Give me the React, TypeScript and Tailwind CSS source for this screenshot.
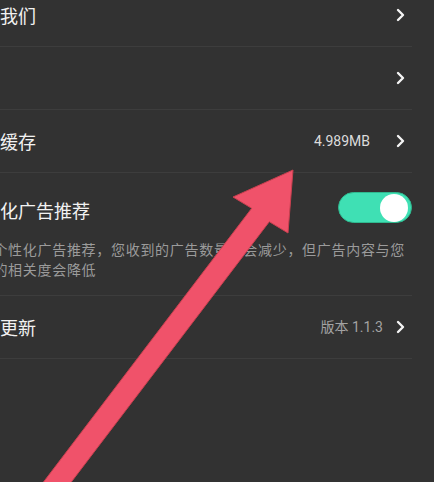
import React from "react";

function Chevron() {
  return (
    <svg width="9" height="14" viewBox="0 0 9 14" className="shrink-0">
      <path d="M2 2 L7 7 L2 12" fill="none" stroke="#f4f4f4" strokeWidth="2.4" strokeLinecap="round" strokeLinejoin="round" />
    </svg>
  );
}

function Row({ label, value, valueClass = "", gap = "mr-[13px]" }: { label: string; value?: string; valueClass?: string; gap?: string }) {
  return (
    <div className="h-[63px] flex items-center justify-between border-b border-[#3d3d3d] pr-[7px]">
      <span className="text-[18px] text-[#f2f2f2] leading-[26px]">{label}</span>
      <div className="flex items-center">
        {value && <span className={`text-[14px] ${gap} ${valueClass}`} style={{ fontFamily: "Roboto, 'Noto Sans CJK SC', sans-serif" }}>{value}</span>}
        <Chevron />
      </div>
    </div>
  );
}

export default function App() {
  return (
    <div
      className="relative w-[434px] h-[482px] overflow-hidden bg-[#323232]"
      style={{ fontFamily: "'Noto Sans CJK SC', 'Noto Sans', sans-serif" }}
    >
      {/* settings list, shifted left like the cropped screenshot */}
      <div className="ml-[-36px] mt-[-16px] w-[448px]">
        <Row label="关于我们" />
        <Row label="帮助" />
        <Row label="清除缓存" value="4.989MB" valueClass="text-[#dcdcdc]" gap="mr-[26px]" />

        <div className="border-b border-[#3d3d3d] pt-[19px] pb-[16px]">
          <div className="h-[31px] flex items-center justify-between">
            <span className="text-[18px] text-[#f2f2f2] leading-[26px] mt-[4px]">个性化广告推荐</span>
            <div className="w-[74px] h-[31px] rounded-full bg-[#3fe0b4] border border-[#2fb98f] flex items-center justify-end pr-[3px]">
              <div className="w-[28px] h-[28px] rounded-full bg-white" />
            </div>
          </div>
          <p className="mt-[16px] text-[14px] leading-[20px] tracking-[0.7px] text-[#9b9b9b] whitespace-nowrap">
            关闭个性化广告推荐，您收到的广告数量不会减少，但广告内容与您
            <br />
            兴趣的相关度会降低
          </p>
        </div>

        <Row label="检查更新" value="版本 1.1.3" valueClass="text-[#a3a3a3]" gap="mr-[13px]" />
      </div>

      {/* red annotation arrow */}
      <svg className="absolute inset-0 pointer-events-none" width="434" height="482" viewBox="0 0 434 482">
        <polygon
          points="293,170 288,233 269.3,221.7 37.3,526.7 19.7,513.3 251.7,208.3 233,197"
          fill="#f0526a"
          stroke="#c9404f"
          strokeWidth="1"
          strokeLinejoin="round"
        />
      </svg>
    </div>
  );
}
